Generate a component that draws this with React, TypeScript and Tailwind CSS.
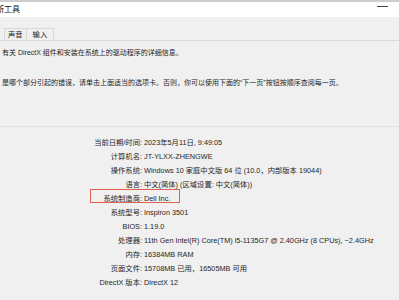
const rows: [string, string][] = [
  ['当前日期/时间:', '2023年5月11日, 9:49:05'],
  ['计算机名:', 'JT-YLXX-ZHENGWE'],
  ['操作系统:', 'Windows 10 家庭中文版 64 位 (10.0，内部版本 19044)'],
  ['语言:', '中文(简体) (区域设置: 中文(简体))'],
  ['系统制造商:', 'Dell Inc.'],
  ['系统型号:', 'Inspiron 3501'],
  ['BIOS:', '1.19.0'],
  ['处理器:', '11th Gen Intel(R) Core(TM) i5-1135G7 @ 2.40GHz (8 CPUs), ~2.4GHz'],
  ['内存:', '16384MB RAM'],
  ['页面文件:', '15708MB 已用，16505MB 可用'],
  ['DirectX 版本:', 'DirectX 12'],
]

export default function App() {
  return (
    <div
      className="w-[399px] h-[300px] overflow-hidden bg-[#f0f0f0] text-[#262626] text-[7.3px]"
      style={{ fontFamily: '"Liberation Sans", "Noto Sans CJK SC", sans-serif' }}
    >
      {/* title bar */}
      <div className="h-[2px] bg-[#cdcdcd]" />
      <div className="h-[15px] bg-white flex items-center justify-between overflow-hidden">
        <span className="ml-[-12px] text-[8px] text-[#111] whitespace-nowrap">诊断工具</span>
        <span className="mr-[11px] mt-[-6px] block w-[11px] h-[1px] bg-[#444]" />
      </div>

      {/* tabs */}
      <div className="h-[24px] flex items-end border-b border-[#d9d9d9] pl-[4px]">
        <div className="h-[12px] flex">
          <div className="border-l border-r border-t border-[#d9d9d9] px-[3px] flex items-center leading-none">声音</div>
          <div className="border-r border-t border-[#d9d9d9] px-[6px] flex items-center leading-none">输入</div>
        </div>
      </div>

      {/* intro */}
      <p className="mt-[6px] pl-[2px] text-[7px] leading-[12px] whitespace-nowrap">有关 DirectX 组件和安装在系统上的驱动程序的详细信息。</p>
      <p className="mt-[18px] pl-[2px] text-[7px] leading-[12px] whitespace-nowrap">
        是哪个部分引起的错误，请单击上面适当的选项卡。否则，你可以使用下面的“下一页”按钮按顺序查阅每一页。
      </p>

      <div className="mt-[37px] h-[1px] bg-[#e2e2e2]" />

      {/* system info */}
      <div className="mt-[9px] flex flex-col">
        {rows.map(([label, value]) => (
          <div key={label} className="flex h-[14px] items-center whitespace-nowrap">
            <div className="w-[142px] text-right">
              {label === '系统制造商:' ? (
                <span className="relative">
                  {label}
                  <span className="absolute left-[-13px] top-[-5px] w-[90px] h-[14px] border border-[#e0604e]" />
                </span>
              ) : (
                label
              )}
            </div>
            <div className="pl-[2px]">{value}</div>
          </div>
        ))}
      </div>
    </div>
  )
}
